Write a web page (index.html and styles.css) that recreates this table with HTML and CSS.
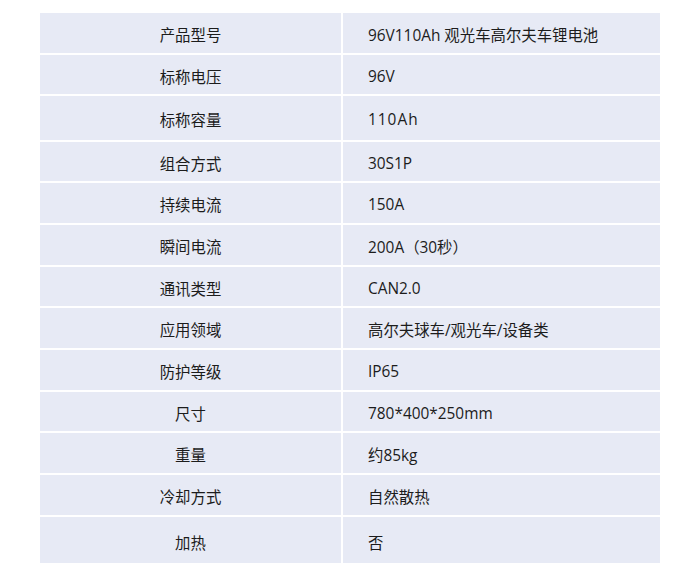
FILE: index.html
```html
<!DOCTYPE html>
<html lang="zh">
<head>
<meta charset="utf-8">
<link rel="stylesheet" href="styles.css">
</head>
<body>
<div class="spec">
  <div class="k">产品型号</div><div class="v">96V110Ah 观光车高尔夫车锂电池</div>
  <div class="k">标称电压</div><div class="v">96V</div>
  <div class="k tall">标称容量</div><div class="v tall spaced">110Ah</div>
  <div class="k">组合方式</div><div class="v">30S1P</div>
  <div class="k">持续电流</div><div class="v">150A</div>
  <div class="k">瞬间电流</div><div class="v">200A（30秒）</div>
  <div class="k">通讯类型</div><div class="v">CAN2.0</div>
  <div class="k">应用领域</div><div class="v">高尔夫球车/观光车/设备类</div>
  <div class="k">防护等级</div><div class="v">IP65</div>
  <div class="k">尺寸</div><div class="v">780*400*250mm</div>
  <div class="k">重量</div><div class="v">约85kg</div>
  <div class="k">冷却方式</div><div class="v">自然散热</div>
  <div class="k last">加热</div><div class="v last">否</div>
</div>
</body>
</html>
```
FILE: styles.css
```css
html, body {
  margin: 0;
  padding: 0;
  background: #ffffff;
}
body {
  padding: 13px 0 0 40px;
  font-family: "Open Sans", "Noto Sans CJK SC", sans-serif;
  font-size: 15.4px;
  color: #1c1c1c;
}
.spec {
  width: 620px;
  display: grid;
  grid-template-columns: 301px 1fr;
  gap: 2px;
  background: #ffffff;
}
.k, .v {
  background: #e7eaf5;
  height: 39.7px;
  display: flex;
  align-items: center;
  padding-top: 3px;
  box-sizing: border-box;
}
.k {
  justify-content: center;
}
.v {
  padding-left: 25px;
}
.spaced {
  letter-spacing: 1px;
}
.tall {
  height: 43.3px;
}
.last {
  height: 46px;
  padding-top: 6px;
}
```
